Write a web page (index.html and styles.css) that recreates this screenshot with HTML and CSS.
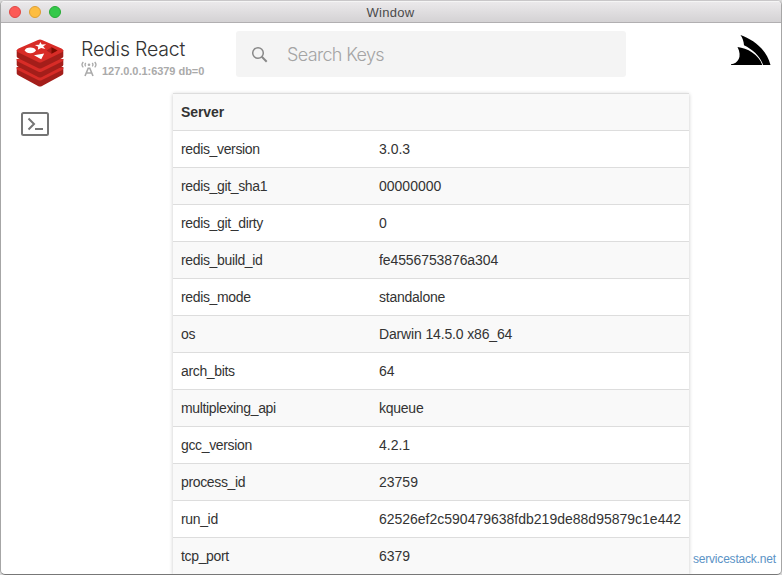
FILE: index.html
```html
<!DOCTYPE html>
<html lang="en">
<head>
<meta charset="utf-8">
<title>Redis React</title>
<link rel="stylesheet" href="styles.css">
</head>
<body>
<div class="window">
  <div class="titlebar">
    <div class="lights"><i class="light close"></i><i class="light minimize"></i><i class="light zoom"></i></div>
    <span class="window-title">Window</span>
  </div>
  <header class="header">
    <svg class="redis-logo" viewBox="0 0 48 48" width="48" height="48">
      <path fill="#a41e1a" d="M.7 28v6.500q0 1 2 2L22 47q2 1 4 0l19.300-10.500q2-1 2-2V28z"/>
      <path fill="#d82c27" d="M.7 28.500h46.600v1q0 1-2 2L26 41q-2 1-4 0L2.700 31.500q-2-1-2-2z"/>
      <path fill="#a41e1a" d="M.7 20v6q0 1 2 2L22 38q2 1 4 0l19.300-10q2-1 2-2v-6z"/>
      <path fill="#d82c27" d="M.7 20h46.600v1q0 1-2 2L26 32.500q-2 1-4 0L2.700 23q-2-1-2-2z"/>
      <path fill="#a41e1a" d="M.7 11v6.500q0 1 2 2L22 29q2 1 4 0l19.300-9.500q2-1 2-2V11z"/>
      <path fill="#d82c27" d="M2.500 9.500L22 .9q2-1 4 0L45.500 9.500q3.500 2 0 4L26 23q-2 1-4 0L2.500 13.500q-3.500-2 0-4z"/>
      <ellipse cx="14.300" cy="11.300" rx="5.400" ry="2.900" fill="#fff"/>
      <path fill="#fff" d="M24.300 3l1.500 2.600 4.300-.4-2.900 2.200 2.200 2.500-4.300-1-3.300 1.800.4-3-3.300-1.700 4.200-.3zM18 16.300l10.200-1.700-3 5.700z"/>
      <path fill="#ad1f1b" d="M30.500 11.500l5-3.200 6 3.200-6 3.200z"/>
      <path fill="#7a0c00" d="M35.500 8.300l6 3.200-6 3.200z"/>
    </svg>
    <div class="brand">
      <div class="brand-name">Redis React</div>
      <div class="connection">
        <svg width="16" height="16" viewBox="0 0 16 16" fill="none" stroke="#aaa" stroke-width="1.300">
          <path d="M2.300 1q-2.600 2.700 0 5.400M4.800 2q-1.500 1.700 0 3.400M13.700 1q2.600 2.700 0 5.400M11.200 2q1.500 1.700 0 3.400"/>
          <path stroke-width="1.600" d="M4 15L7.200 7.300h1.600L12 15M5.200 12h5.600"/>
          <circle cx="8" cy="3.700" r="1.300" fill="#aaa" stroke="none"/>
        </svg>
        <span class="address">127.0.0.1:6379 db=0</span>
      </div>
    </div>
    <div class="search">
      <svg width="17" height="17" viewBox="0 0 17 17" fill="none" stroke="#888"><circle cx="7" cy="7" r="5.300" stroke-width="1.500"/><path d="M10.800 10.800l4.900 4.900" stroke-width="2"/></svg>
      <span class="placeholder">Search Keys</span>
    </div>
    <svg class="shark" width="40" height="32" viewBox="0 0 40 32">
      <path d="M9.500 1C22 5.500 35.500 15 39.500 31H32.200C29 22 21 15 13 11.300 12.800 7.500 11.500 4 9.500 1z"/>
      <path d="M6.500 13C16 14 28 20.500 31.300 31H0v-.7C7 29.500 11.500 23 6.500 13z"/>
    </svg>
  </header>
  <main class="content">
    <nav class="sidebar">
      <svg width="28" height="24" viewBox="0 0 28 24" fill="none" stroke="#757575" stroke-width="2"><rect x="1" y="1" width="26" height="22" rx="1.500"/><path d="M7.500 6.500l5.500 5.500-5.500 5.500M14 17h8"/></svg>
    </nav>
    <section class="card">
      <div class="row head">Server</div>
      <div class="row"><span class="key">redis_version</span><span class="value">3.0.3</span></div>
      <div class="row"><span class="key">redis_git_sha1</span><span class="value">00000000</span></div>
      <div class="row"><span class="key">redis_git_dirty</span><span class="value">0</span></div>
      <div class="row"><span class="key">redis_build_id</span><span class="value hash">fe4556753876a304</span></div>
      <div class="row"><span class="key">redis_mode</span><span class="value word">standalone</span></div>
      <div class="row"><span class="key">os</span><span class="value system">Darwin 14.5.0 x86_64</span></div>
      <div class="row"><span class="key">arch_bits</span><span class="value">64</span></div>
      <div class="row"><span class="key">multiplexing_api</span><span class="value word">kqueue</span></div>
      <div class="row"><span class="key">gcc_version</span><span class="value">4.2.1</span></div>
      <div class="row"><span class="key">process_id</span><span class="value">23759</span></div>
      <div class="row"><span class="key">run_id</span><span class="value">62526ef2c590479638fdb219de88d95879c1e442</span></div>
      <div class="row"><span class="key">tcp_port</span><span class="value">6379</span></div>
    </section>
    <a class="site">servicestack.net</a>
  </main>
</div>
</body>
</html>
```
FILE: styles.css
```css
* { box-sizing: border-box; }
body { margin: 0; background: #d8d8d8; font-family: "Liberation Sans", Arial, sans-serif; overflow: hidden; }
svg { display: block; flex: none; }
.window { width: 782px; height: 575px; border: 1px solid #a6a6a6; border-top-color: #c9c7c9; border-bottom-color: #777; border-radius: 5px; background: #fff; overflow: hidden; display: flex; flex-direction: column; }
.titlebar { height: 22px; flex: none; display: grid; grid-template-columns: 1fr auto 1fr; align-items: center; background: linear-gradient(#ebe9eb, #d4d2d4); border-top: 1px solid #f5f5f5; border-bottom: 1px solid #b1afb1; }
.lights { display: flex; gap: 8px; padding-left: 8px; }
.light { width: 12px; height: 12px; border-radius: 50%; border: 1px solid; }
.close { background: #fc5b57; border-color: #df4744; }
.minimize { background: #fdbd41; border-color: #de9f34; }
.zoom { background: #34c84a; border-color: #27aa35; }
.window-title { font-size: 13px; line-height: 18px; letter-spacing: .3px; color: #4b4b4b; padding-top: 2px; margin-left: -1px; }
.header { height: 70px; flex: none; display: flex; align-items: flex-start; padding: 8px 10px 0 15px; }
.redis-logo { margin-top: 8px; }
.brand { width: 156px; margin-left: 17px; }
.brand-name { font: 300 19.500px/24px Inter, sans-serif; letter-spacing: -.2px; color: #333; margin-top: 6px; white-space: nowrap; }
.connection { display: flex; gap: 5px; height: 18px; }
.address { font-size: 11px; font-weight: bold; line-height: 21px; letter-spacing: -.04px; color: #aaa; white-space: nowrap; }
.search { width: 390px; height: 46px; margin-left: -1px; background: #f4f4f4; border-radius: 3px; display: flex; align-items: center; padding-left: 15px; gap: 19px; }
.placeholder { font: 300 18px/26px Inter, sans-serif; letter-spacing: -.65px; color: #a4a4a4; padding-top: 2px; }
.shark { margin: 3px 0 0 auto; }
.content { flex: 1; min-height: 0; display: flex; }
.sidebar { width: 172px; flex: none; padding: 19px 0 0 20px; }
.card { width: 516px; flex: none; box-shadow: 0 1px 4px rgba(0,0,0,.22); }
.row { height: 37px; display: flex; align-items: center; padding: 0 8px 1px; border-top: 1px solid #ddd; font-size: 14px; line-height: 20px; color: #333; background: #fff; white-space: nowrap; }
.row:nth-child(odd) { background: #f9f9f9; }
.head { font-weight: bold; letter-spacing: -.1px; }
.key { width: 198px; letter-spacing: -.35px; }
.word { letter-spacing: -.25px; }
.system { letter-spacing: -.15px; }
.hash { letter-spacing: -.1px; }
.site { align-self: flex-end; margin: 0 0 8px 4px; font-size: 12px; line-height: 14px; letter-spacing: -.2px; color: #5b93c6; white-space: nowrap; }
```
